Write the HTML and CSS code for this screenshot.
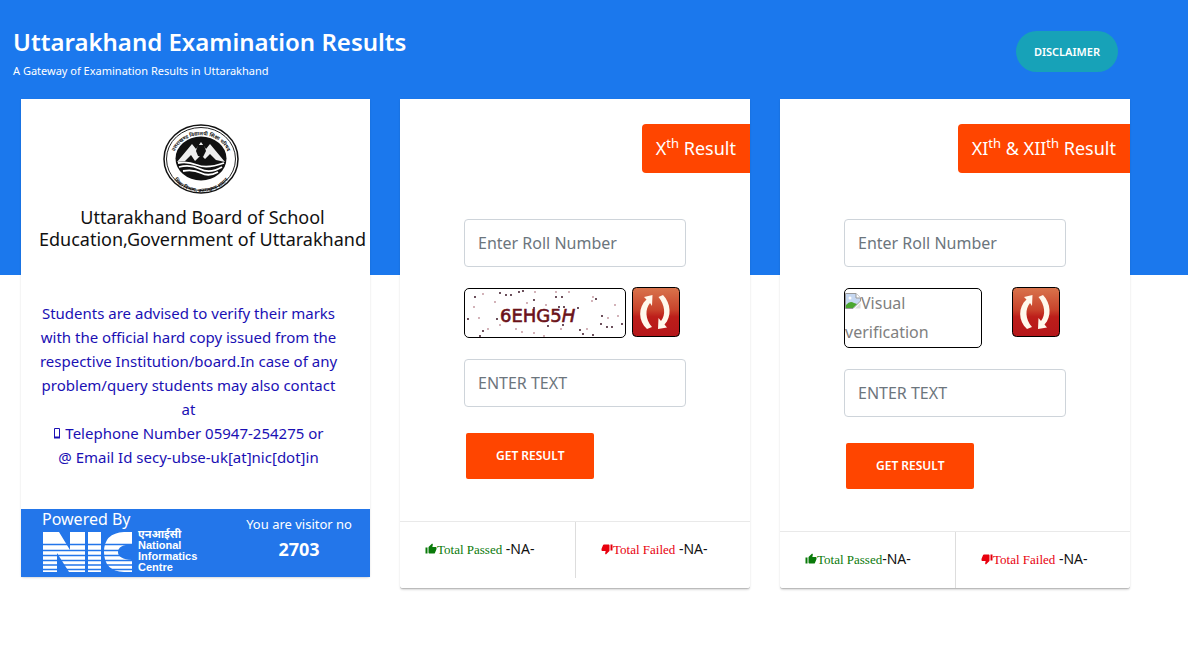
FILE: index.html
```html
<!DOCTYPE html>
<html lang="en">
<head>
<meta charset="utf-8">
<title>Uttarakhand Examination Results</title>
<link rel="stylesheet" href="styles.css">
</head>
<body>
<svg class="defs" aria-hidden="true">
  <defs>
    <linearGradient id="red" x1="0" y1="0" x2="0" y2="1">
      <stop offset="0" stop-color="#d9744c"/><stop offset=".45" stop-color="#c9442c"/><stop offset=".6" stop-color="#bd1e1a"/><stop offset="1" stop-color="#b5161a"/>
    </linearGradient>
    <symbol id="refresh" viewBox="0 0 48 50">
      <rect x=".5" y=".5" width="47" height="49" rx="4" fill="url(#red)" stroke="#000"/>
      <path d="M20.500 8L12 10L14.500 12.500C6 20 6 34 15 42L20 40C13 32 13 22 18 16L20 19Z" fill="#fff8ec"/>
      <path d="M26 42L35 40.500L32.500 37.500C40 30 39 16 31 8L26.500 10C33 18 34 28 29 34L26.500 31Z" fill="#fff8ec"/>
    </symbol>
    <symbol id="thumb" viewBox="0 0 24 24">
      <path d="M1 21h4V9H1v12zm22-11c0-1.100-.9-2-2-2h-6.310l.95-4.570.03-.32c0-.41-.17-.79-.44-1.060L14.170 1 7.590 7.590C7.220 7.950 7 8.450 7 9v10c0 1.100.9 2 2 2h9c.83 0 1.540-.5 1.840-1.220l3.020-7.050c.09-.23.14-.47.14-.73v-2z" fill="currentColor"/>
    </symbol>
  </defs>
</svg>
<header class="banner">
  <div>
    <h1 class="title">Uttarakhand Examination Results</h1>
    <p class="tagline">A Gateway of Examination Results in Uttarakhand</p>
  </div>
  <button class="disclaimer" type="button">DISCLAIMER</button>
</header>
<main class="cards">
  <section class="card about">
    <svg class="seal" viewBox="0 0 76 70" role="img" aria-label="Board seal">
      <ellipse cx="38" cy="35" rx="37" ry="34" fill="#fff" stroke="#111" stroke-width="1.500"/>
      <ellipse cx="38" cy="35" rx="34.500" ry="31.500" fill="none" stroke="#222"/>
      <path id="ring-top" d="M10 42A28.500 26 0 1 1 66 42" fill="none"/>
      <path id="ring-low" d="M5 39A33 29 0 0 0 71 39" fill="none"/>
      <text class="seal-text"><textPath href="#ring-top" startOffset="50%">उत्तराखण्ड विद्यालयी शिक्षा परिषद</textPath></text>
      <text class="seal-text"><textPath href="#ring-low" startOffset="50%">शिक्षा विभाग, उत्तराखण्ड शासन</textPath></text>
      <ellipse cx="38" cy="34.500" rx="25.500" ry="22" fill="#111"/>
      <path d="M14 38L29 20L33 25L38 18L43 25L47 20L62 38L53 36L47 30L42 35L38 31L32 37L28 31L22 37Z" fill="#eee"/>
      <path d="M35 21L41 21L43 27L40 33L35 32L33 27Z" fill="#111"/>
      <path d="M15 39Q24 37 34 41T61 39M16 43Q27 40 37 45T59 43M20 47Q30 45 38 49T55 48" fill="none" stroke="#fff" stroke-width="1.800"/>
    </svg>
    <h2 class="board">Uttarakhand Board of School Education,Government of Uttarakhand</h2>
    <p class="advice">Students are advised to verify their marks with the official hard copy issued from the respective Institution/board.In case of any problem/query students may also contact at<br>
      <svg class="phone" viewBox="0 0 8 12" aria-hidden="true"><path d="M1.500 1.500h5v9h-5z" fill="none" stroke="currentColor"/><path d="M1 10.500h6" stroke="currentColor" stroke-width="2"/></svg> Telephone Number 05947-254275 or<br>
      @ Email Id secy-ubse-uk[at]nic[dot]in</p>
    <footer class="powered">
      <div class="nic">
        <span>Powered By</span>
        <div class="nic-brand">
          <svg class="nic-mark" viewBox="0 0 90 41" role="img" aria-label="NIC">
            <path d="M1 1H17L28 19V1H43V41H27L15 22V41H1ZM46 1H59V41H46ZM90 1V13Q76 14 76 21Q76 28 90 29V41H82Q62 40 62 21Q62 2 82 1Z" fill="#fff"/>
            <path d="M0 13.500H90M0 19.500H90M0 24.500H90M0 29.500H90M0 34H90M0 38.500H90" stroke="#2376ea" stroke-width="1.300"/>
          </svg>
          <span class="nic-name"><span lang="hi">एनआईसी</span><br>National<br>Informatics<br>Centre</span>
        </div>
      </div>
      <div class="visitors">You are visitor no<strong>2703</strong></div>
    </footer>
  </section>

  <section class="card result">
    <h2 class="ribbon">X<sup>th</sup> Result</h2>
    <form class="form">
      <input class="field" type="text" aria-label="Roll number" placeholder="Enter Roll Number">
      <div class="verify">
        <svg class="captcha" viewBox="0 0 160 48" role="img" aria-label="Verification code">
          <path class="dots" d="M10 8h0M35 4h0M41 6h0M46 6h0M54 3h0M58 2h0M69 11h0M91 8h0M97 8h0M131 10h0M3 30h0M32 30h0M69 19h0M94 18h0M99 18h0M113 19h0M137 27h0M136 35h0M142 38h0M147 38h0M18 42h0M15 47h0M83 37h0M98 36h0M118 45h0M128 46h0M115 41h0M157 35h0"/>
          <path class="specks" d="M18 5h0M70 3h0M91 3h0M104 3h0M128 8h0M150 16h0M62 14h0M81 16h0M127 12h0M14 29h0M23 40h0M35 36h0M51 40h0M57 43h0M69 44h0M96 40h0M122 40h0M143 29h0M153 27h0M30 13h0M79 47h0M9 18h0"/>
          <text class="code" x="35" y="33">6EHG5<tspan font-style="italic">H</tspan></text>
        </svg>
        <button class="reload" type="button" aria-label="New code"><svg viewBox="0 0 48 50"><use href="#refresh"/></svg></button>
      </div>
      <input class="field" type="text" aria-label="Verification text" placeholder="ENTER TEXT">
      <button class="submit" type="submit">GET RESULT</button>
    </form>
    <div class="stats">
      <div class="stat"><span class="passed"><svg class="icon" viewBox="0 0 24 24"><use href="#thumb"/></svg>Total Passed</span> -NA-</div>
      <div class="stat"><span class="failed"><svg class="icon down" viewBox="0 0 24 24"><use href="#thumb"/></svg>Total Failed</span> -NA-</div>
    </div>
  </section>

  <section class="card result">
    <h2 class="ribbon">XI<sup>th</sup> &amp; XII<sup>th</sup> Result</h2>
    <form class="form">
      <input class="field" type="text" aria-label="Roll number" placeholder="Enter Roll Number">
      <div class="verify">
        <div class="missing"><svg class="broken" viewBox="0 0 16 16" aria-hidden="true"><path d="M.5.500H11L15.500 5V8L8 15.500H.5Z" fill="#c6d8f2" stroke="#999"/><path d="M11 .5V5H15.500" fill="#fff" stroke="#999"/><path d="M1 15V12Q5 7 9 10L12 11L8 15Z" fill="#4ba72f"/><circle cx="5" cy="5" r="1.500" fill="#fff"/><path d="M15.500 10V15.500H10Z" fill="#ddd"/></svg>Visual verification</div>
        <button class="reload" type="button" aria-label="New code"><svg viewBox="0 0 48 50"><use href="#refresh"/></svg></button>
      </div>
      <input class="field" type="text" aria-label="Verification text" placeholder="ENTER TEXT">
      <button class="submit" type="submit">GET RESULT</button>
    </form>
    <div class="stats">
      <div class="stat"><span class="passed"><svg class="icon" viewBox="0 0 24 24"><use href="#thumb"/></svg>Total Passed</span>-NA-</div>
      <div class="stat"><span class="failed"><svg class="icon down" viewBox="0 0 24 24"><use href="#thumb"/></svg>Total Failed</span> -NA-</div>
    </div>
  </section>
</main>
</body>
</html>
```
FILE: styles.css
```css
* { box-sizing: border-box; }
body {
  margin: 0;
  font: 16px/24px "Noto Sans", "Open Sans", sans-serif;
  color: #111;
  background: linear-gradient(#1b78ed, #1b78ed) no-repeat 0 0 / 100% 275px #fff;
}
h1, h2, p { margin: 0; font-weight: 400; }
button { font: inherit; border: 0; cursor: pointer; }
.defs { position: absolute; width: 0; height: 0; }
.banner {
  display: flex;
  justify-content: space-between;
  align-items: flex-start;
  padding: 23px 70px 0 13px;
  height: 99px;
  color: #fff;
}
.title { font-size: 24px; line-height: 37px; font-weight: 600; }
.tagline { font-size: 11px; line-height: 22px; }
.disclaimer {
  margin-top: 8px;
  height: 41px;
  padding: 0 18px;
  border-radius: 21px;
  background: #17a2b8;
  color: #fff;
  font-size: 11px;
  font-weight: 600;
}
.cards {
  display: grid;
  grid-template-columns: repeat(3, minmax(0, 1fr));
  gap: 30px;
  padding: 0 58px 4px 20px;
}
.card {
  display: flex;
  flex-direction: column;
  background: #fff;
  border-radius: 0 0 3px 3px;
  box-shadow: 0 1px 2px rgba(0, 0, 0, .15);
}
.about {
  align-self: start;
  align-items: center;
  margin-left: 1px;
  text-align: center;
}
.result { border-bottom: 1px solid #bbb; }
.seal { width: 76px; height: 70px; margin: 25px 0 12px 10px; }
.seal-text { font: 700 5px "Noto Sans", sans-serif; text-anchor: middle; fill: #111; }
.board { padding-left: 14px; font-size: 18px; line-height: 22px; }
.advice {
  padding: 51px 32px 40px 18px;
  font-size: 15px;
  line-height: 24px;
  color: #1a10b4;
}
.phone { width: 8px; height: 12px; }
.powered {
  display: flex;
  justify-content: space-between;
  align-self: stretch;
  height: 68px;
  padding: 0 18px 0 21px;
  background: #2376ea;
  color: #fff;
  text-align: left;
}
.nic { line-height: 20px; }
.nic-brand { display: flex; gap: 6px; }
.nic-mark { width: 90px; height: 41px; margin-top: 2px; }
.nic-name { font: 700 11px/11px "Liberation Sans", "Noto Sans", sans-serif; }
.visitors { padding-top: 3px; font-size: 13px; text-align: center; }
.visitors strong { display: block; font-size: 18px; line-height: 26px; }
.ribbon {
  align-self: flex-end;
  margin-top: 25px;
  padding: 0 14px;
  border-radius: 4px 0 0 4px;
  background: #ff4500;
  color: #fff;
  font-size: 18px;
  line-height: 49px;
}
.ribbon sup { font-size: 13px; line-height: 0; }
.form { display: flex; flex-direction: column; align-items: flex-start; padding: 46px 64px 42px; }
.field {
  width: 100%;
  height: 48px;
  padding: 0 13px;
  border: 1px solid #ced4da;
  border-radius: 4px;
  background: #fff;
  font: inherit;
}
.field::placeholder { color: #6c757d; opacity: 1; }
.verify { display: flex; justify-content: space-between; align-items: flex-start; width: 100%; padding: 21px 6px 21px 0; }
.captcha { width: 162px; height: 50px; border: 1px solid #000; border-radius: 5px; }
.dots, .specks { fill: none; stroke: #3b1626; stroke-width: 2; stroke-linecap: round; }
.specks { stroke: #c59aa2; }
.code { font: 18px "DejaVu Sans", sans-serif; fill: #6b1219; stroke: #6b1219; stroke-width: .6; }
.reload { width: 48px; height: 50px; margin-top: -1px; padding: 0; background: none; }
.reload svg { display: block; }
.missing { width: 138px; height: 60px; border: 1px solid #000; border-radius: 5px; line-height: 29px; color: gray; overflow: hidden; }
.broken { width: 16px; height: 16px; }
.submit {
  height: 46px;
  margin: 26px 0 0 2px;
  padding: 0 30px;
  border-radius: 2px;
  background: #ff4500;
  color: #fff;
  font-size: 12px;
  font-weight: 600;
}
.stats { display: grid; grid-template-columns: 1fr 1fr; border-top: 1px solid #e9e9e9; }
.stat { height: 56px; padding: 15px 0 0 25px; font-size: 14px; line-height: 24px; white-space: nowrap; }
.stat + .stat { border-left: 1px solid #ddd; }
.passed, .failed { font-family: "Liberation Serif", serif; font-size: 13px; }
.passed { color: #0a7a0a; }
.failed { color: #e8000e; }
.icon { width: 12px; height: 12px; vertical-align: -1px; }
.down { transform: rotate(180deg); }
```
